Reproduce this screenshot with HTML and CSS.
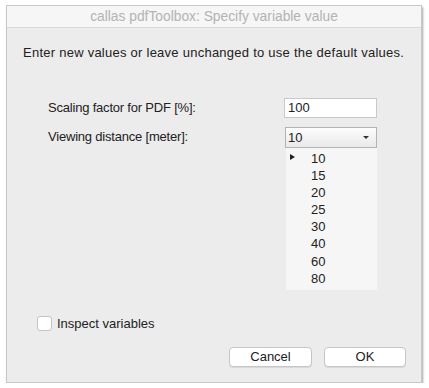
FILE: index.html
```html
<!doctype html>
<html lang="en">
<head>
	<meta charset="UTF-8" />
	<title>callas pdfToolbox: Specify variable value</title>
	<link rel="stylesheet" href="styles.css">
</head>
<body>
	<section class="window">
		<header class="titlebar">callas pdfToolbox: Specify variable value</header>
		<div class="content">
			<p class="intro">Enter new values or leave unchanged to use the default values.</p>
			<div class="fields">
				<div class="row">
					<label>Scaling factor for PDF [%]:</label>
					<div class="input">100</div>
				</div>
				<div class="row">
					<label>Viewing distance [meter]:</label>
					<div class="combo">
						<div class="select">
							<span>10</span>
							<svg width="6" height="3" viewBox="0 0 6 3"><path d="M0 0h6L3 3z" fill="#333"/></svg>
						</div>
						<ul class="menu">
							<li class="checked">10</li>
							<li>15</li>
							<li>20</li>
							<li>25</li>
							<li>30</li>
							<li>40</li>
							<li>60</li>
							<li>80</li>
						</ul>
					</div>
				</div>
			</div>
			<label class="check"><span class="box"></span>Inspect variables</label>
			<div class="buttons">
				<button class="btn cancel">Cancel</button>
				<button class="btn ok">OK</button>
			</div>
		</div>
	</section>
</body>
</html>
```
FILE: styles.css
```css
body{
	margin: 0;
	background: #fff;
	font-family: "Liberation Sans", Arial, sans-serif;
	font-size: 13px;
	color: #222;
}
.window{
	width: 416px;
	height: 378px;
	margin: 5px 0 0 6px;
	background: #ececec;
	border: 1px solid #c8c8c8;
	box-sizing: border-box;
	box-shadow: 1px 2px 2px rgba(0,0,0,.35);
	display: flex;
	flex-direction: column;
}
.titlebar{
	height: 21px;
	background: #f6f6f6;
	border-bottom: 1px solid #d9d9d9;
	text-align: center;
	line-height: 21px;
	color: #b3b3b3;
	font-size: 13.8px;
}
.content{
	flex: 1;
	display: flex;
	flex-direction: column;
	padding: 0 15px 0 16px;
}
.intro{
	margin: 17px 0 0;
	line-height: 16px;
	letter-spacing: .25px;
}
.fields{
	margin-top: 37px;
	padding-left: 25px;
	display: flex;
	flex-direction: column;
	gap: 9px;
}
.row{
	display: flex;
	align-items: flex-start;
}
.row label{
	width: 236px;
	line-height: 20px;
	letter-spacing: -.2px;
}
.input{
	width: 93px;
	height: 20px;
	box-sizing: border-box;
	background: #fff;
	border: 1px solid #c9c9c9;
	padding-left: 3px;
	line-height: 18px;
}
.combo{
	width: 92px;
	margin-left: 1px;
}
.select{
	height: 21px;
	box-sizing: border-box;
	border: 1px solid #b4b4b4;
	background: linear-gradient(#fdfdfd, #e9e9e9);
	display: flex;
	align-items: center;
	justify-content: space-between;
	padding: 0 7px 0 2px;
}
.menu{
	list-style: none;
	margin: 0 0 0 1px;
	padding: 2px 0 3px;
	background: #f6f6f6;
}
.menu li{
	height: 17.1px;
	line-height: 17px;
	padding-left: 25px;
	position: relative;
}
.menu li.checked::before{
	content: "";
	position: absolute;
	left: 4px;
	top: 4px;
	border-left: 5px solid #222;
	border-top: 3px solid transparent;
	border-bottom: 3px solid transparent;
}
.check{
	margin: 26px 0 0 14px;
	display: flex;
	align-items: center;
	gap: 5px;
}
.box{
	width: 13px;
	height: 13px;
	background: #fff;
	border: 1px solid #c4c4c4;
	border-radius: 3px;
}
.buttons{
	margin-top: 16px;
	display: flex;
	justify-content: flex-end;
	gap: 12px;
}
.btn{
	height: 20px;
	background: #fff;
	border: 1px solid #c6c6c6;
	border-radius: 4px;
	font-family: "Liberation Sans", Arial, sans-serif;
	font-size: 13px;
	color: #222;
	padding: 0;
	box-shadow: 0 1px 0 rgba(0,0,0,.08);
}
.cancel{
	width: 83px;
}
.ok{
	width: 82px;
}
```
